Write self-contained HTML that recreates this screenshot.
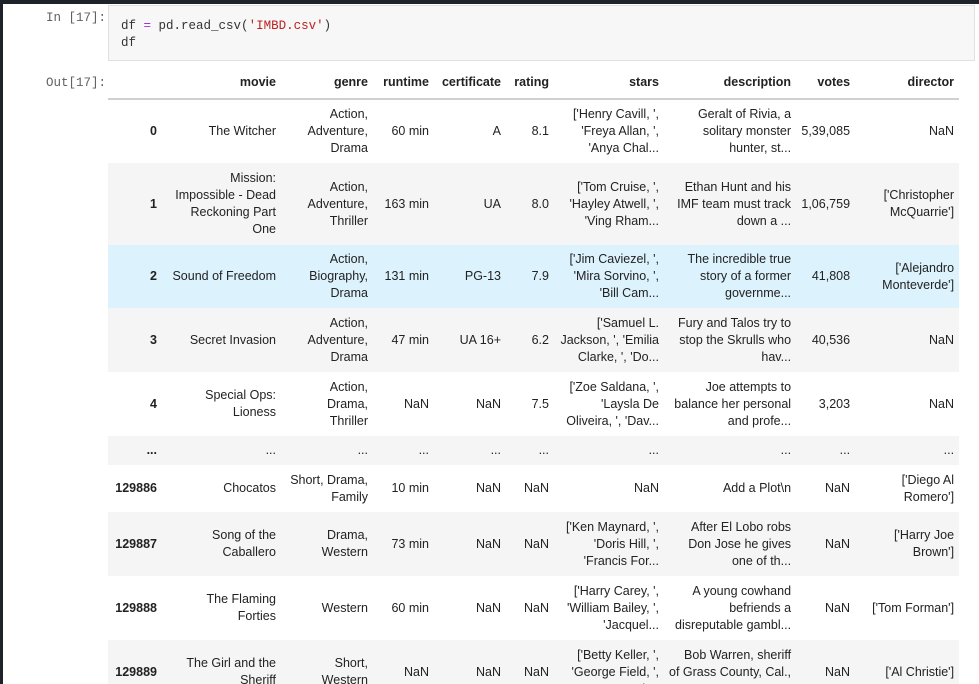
<!DOCTYPE html>
<html style="overflow:hidden;height:684px"><head><meta charset="utf-8"><style>
body{margin:0;width:979px;height:684px;overflow:hidden;background:#1e232b;font-family:"Liberation Sans",sans-serif;}
#p{position:absolute;left:3px;top:4px;width:976px;height:680px;background:#fff;overflow:hidden;}
.pr{position:absolute;font-family:"Liberation Mono",monospace;font-size:12.5px;color:#616161;}
#inp{position:absolute;left:105px;top:1px;width:867px;height:56px;background:#f7f7f7;border:1px solid #e0e0e0;box-sizing:border-box;font-family:"Liberation Mono",monospace;font-size:12.5px;line-height:17px;padding:12px 0 0 12px;color:#333;}
table{position:absolute;left:105px;top:63px;border-collapse:collapse;font-size:12.5px;color:#222;table-layout:fixed;}
td,th{text-align:right;padding:0 5px;line-height:17px;vertical-align:middle;white-space:nowrap;}
th{font-weight:bold;height:31px;border-bottom:2px solid #d0d0d0;}
td.i{font-weight:bold;}
tr.g td{background:#f5f5f5;}
tr.b td{background:#dcf2fd;}
</style></head><body><div id="p">
<div class="pr" style="left:43px;top:7px">In [17]:</div>
<div id="inp">df <span style="color:#a22fdd">=</span> pd.read_csv(<span style="color:#ba2121">'IMBD.csv'</span>)<br>df</div>
<div class="pr" style="left:43px;top:72px">Out[17]:</div>
<table>
<colgroup><col style="width:54px"><col style="width:119px"><col style="width:92px"><col style="width:61px"><col style="width:72px"><col style="width:48px"><col style="width:110px"><col style="width:131px"><col style="width:59px"><col style="width:104px"></colgroup>
<tr><th></th><th>movie</th><th>genre</th><th>runtime</th><th>certificate</th><th>rating</th><th>stars</th><th>description</th><th>votes</th><th>director</th></tr>
<tr style="height:64px"><td class="i">0</td><td>The Witcher</td><td>Action,<br>Adventure,<br>Drama</td><td>60 min</td><td>A</td><td>8.1</td><td>['Henry Cavill, ',<br>'Freya Allan, ',<br>'Anya Chal...</td><td>Geralt of Rivia, a<br>solitary monster<br>hunter, st...</td><td>5,39,085</td><td>NaN</td></tr>
<tr class="g" style="height:82px"><td class="i">1</td><td>Mission:<br>Impossible - Dead<br>Reckoning Part<br>One</td><td>Action,<br>Adventure,<br>Thriller</td><td>163 min</td><td>UA</td><td>8.0</td><td>['Tom Cruise, ',<br>'Hayley Atwell, ',<br>'Ving Rham...</td><td>Ethan Hunt and his<br>IMF team must track<br>down a ...</td><td>1,06,759</td><td>['Christopher<br>McQuarrie']</td></tr>
<tr class="b" style="height:63px"><td class="i">2</td><td>Sound of Freedom</td><td>Action,<br>Biography,<br>Drama</td><td>131 min</td><td>PG-13</td><td>7.9</td><td>['Jim Caviezel, ',<br>'Mira Sorvino, ',<br>'Bill Cam...</td><td>The incredible true<br>story of a former<br>governme...</td><td>41,808</td><td>['Alejandro<br>Monteverde']</td></tr>
<tr class="g" style="height:64px"><td class="i">3</td><td>Secret Invasion</td><td>Action,<br>Adventure,<br>Drama</td><td>47 min</td><td>UA 16+</td><td>6.2</td><td>['Samuel L.<br>Jackson, ', 'Emilia<br>Clarke, ', 'Do...</td><td>Fury and Talos try to<br>stop the Skrulls who<br>hav...</td><td>40,536</td><td>NaN</td></tr>
<tr style="height:64px"><td class="i">4</td><td>Special Ops:<br>Lioness</td><td>Action,<br>Drama,<br>Thriller</td><td>NaN</td><td>NaN</td><td>7.5</td><td>['Zoe Saldana, ',<br>'Laysla De<br>Oliveira, ', 'Dav...</td><td>Joe attempts to<br>balance her personal<br>and profe...</td><td>3,203</td><td>NaN</td></tr>
<tr class="g" style="height:29px"><td class="i">...</td><td>...</td><td>...</td><td>...</td><td>...</td><td>...</td><td>...</td><td>...</td><td>...</td><td>...</td></tr>
<tr style="height:47px"><td class="i">129886</td><td>Chocatos</td><td>Short, Drama,<br>Family</td><td>10 min</td><td>NaN</td><td>NaN</td><td>NaN</td><td>Add a Plot\n</td><td>NaN</td><td>['Diego Al<br>Romero']</td></tr>
<tr class="g" style="height:64px"><td class="i">129887</td><td>Song of the<br>Caballero</td><td>Drama,<br>Western</td><td>73 min</td><td>NaN</td><td>NaN</td><td>['Ken Maynard, ',<br>'Doris Hill, ',<br>'Francis For...</td><td>After El Lobo robs<br>Don Jose he gives<br>one of th...</td><td>NaN</td><td>['Harry Joe<br>Brown']</td></tr>
<tr style="height:64px"><td class="i">129888</td><td>The Flaming<br>Forties</td><td>Western</td><td>60 min</td><td>NaN</td><td>NaN</td><td>['Harry Carey, ',<br>'William Bailey, ',<br>'Jacquel...</td><td>A young cowhand<br>befriends a<br>disreputable gambl...</td><td>NaN</td><td>['Tom Forman']</td></tr>
<tr class="g" style="height:64px"><td class="i">129889</td><td>The Girl and the<br>Sheriff</td><td>Short,<br>Western</td><td>NaN</td><td>NaN</td><td>NaN</td><td>['Betty Keller, ',<br>'George Field, ',<br>'Al ...</td><td>Bob Warren, sheriff<br>of Grass County, Cal.,<br>...</td><td>NaN</td><td>['Al Christie']</td></tr>
</table>
</div></body></html>
